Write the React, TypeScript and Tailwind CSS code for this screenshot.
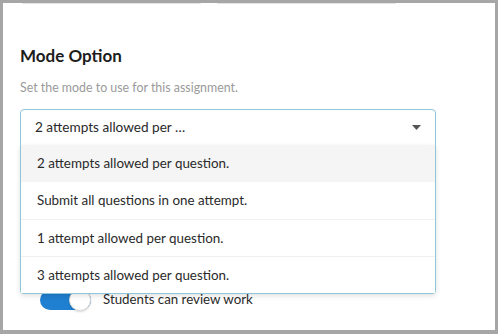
import { useState } from 'react'

const options = [
  '2 attempts allowed per question.',
  'Submit all questions in one attempt.',
  '1 attempt allowed per question.',
  '3 attempts allowed per question.',
]

export default function App() {
  const [selected] = useState(0)
  return (
    <div
      className="w-[498px] h-[334px] bg-[#a6a6a6] pt-[3px] pl-[3px] pr-[3px] pb-[4px]"
      style={{ fontFamily: 'Lato, "Open Sans", sans-serif' }}
    >
      <div className="relative h-full bg-white">
        <div className="flex gap-[16px] pl-[19px]">
          <div className="w-[179px] h-px bg-[#e4e4e4] rounded-b" />
          <div className="w-[179px] h-px bg-[#e4e4e4] rounded-b" />
        </div>
        <div className="pl-[17px] pt-[40px]">
          <h2 className="text-[17px] leading-[24px] font-bold text-[#1c1c1c]">Mode Option</h2>
          <p className="mt-[11px] text-[12.4px] leading-[18px] text-[#9a9a9a]">Set the mode to use for this assignment.</p>
          <div className="relative mt-[12px] w-[416px]">
            <div className="flex items-center justify-between h-[37px] pl-[14px] pr-[14px] border border-[#8fc6d8] rounded-t-[4px] bg-white">
              <span className="text-[13.6px] text-[#2a2a2a]">2 attempts allowed per …</span>
              <svg width="9" height="5" viewBox="0 0 9 5">
                <path d="M0 0h9L4.5 5z" fill="#555" />
              </svg>
            </div>
            <div className="absolute left-0 right-0 top-[36px] z-10 bg-white border border-t-0 border-[#8fc6d8] rounded-b-[4px] shadow-[0_2px_5px_rgba(0,0,0,0.12)]">
              {options.map((o, i) => (
                <div
                  key={o}
                  className={
                    'h-[37px] flex items-center pl-[16px] text-[13.4px] text-[#2a2a2a] ' +
                    (i === selected ? 'bg-[#f5f5f5]' : 'bg-white') +
                    (i > 1 ? ' border-t border-[#f0f0f0]' : '')
                  }
                >
                  {o}
                </div>
              ))}
            </div>
          </div>
          <div className="flex items-center gap-[12px] mt-[144px] pl-[20px]">
            <div className="relative w-[51px] h-[20px] rounded-full bg-[#1f7fd0]">
              <div className="absolute right-0 top-[-1px] w-[22px] h-[22px] rounded-full bg-white border border-[#d9d9d9] shadow-[0_1px_2px_rgba(0,0,0,0.15)]" />
            </div>
            <span className="text-[13.3px] text-[#2a2a2a]">Students can review work</span>
          </div>
        </div>
      </div>
    </div>
  )
}
